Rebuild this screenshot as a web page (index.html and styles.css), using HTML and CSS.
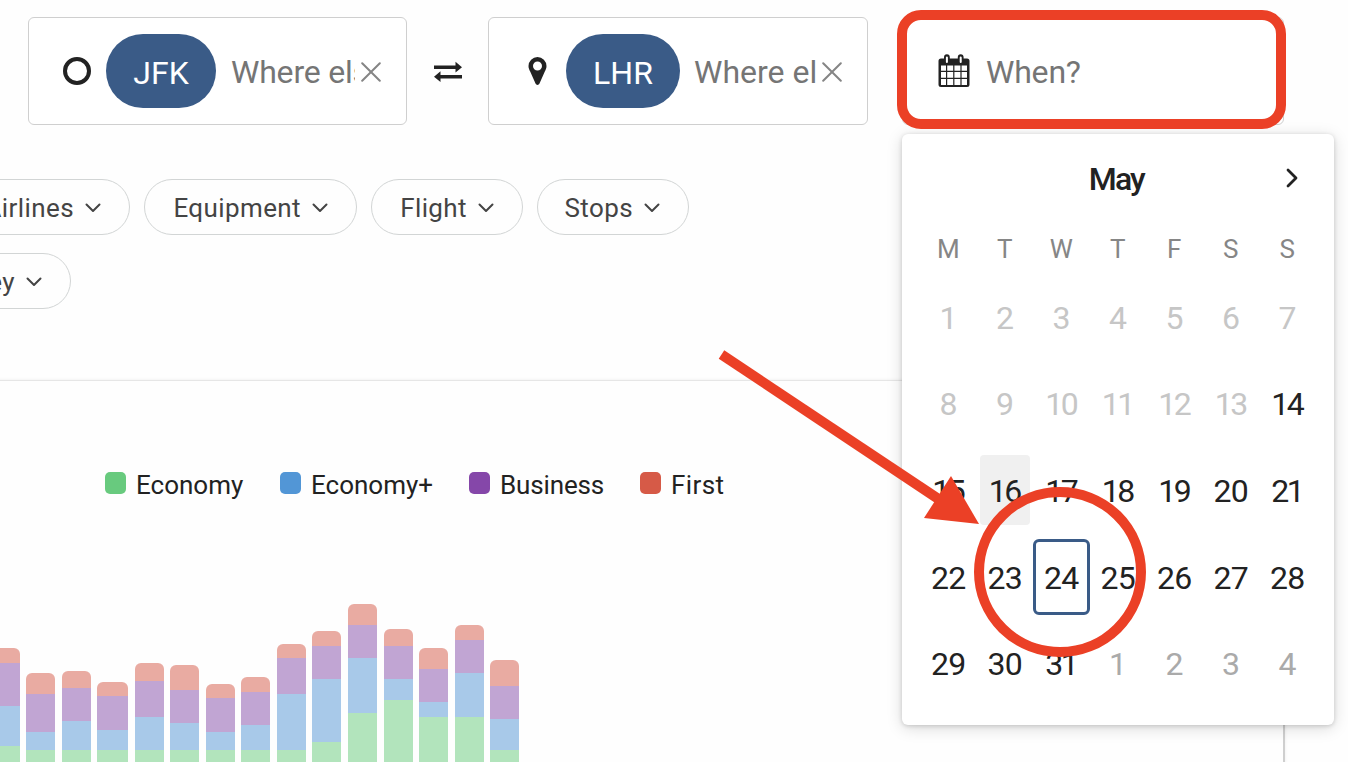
FILE: index.html
```html
<!DOCTYPE html>
<html lang="en">
<head>
<meta charset="utf-8">
<title>Flight search</title>
<link rel="stylesheet" href="styles.css">
</head>
<body>
<header class="search">
  <div class="field">
    <svg class="icon-circle" viewBox="0 0 28 28"><circle cx="14" cy="14" r="12" /></svg>
    <span class="chip chip-from">JFK</span>
    <span class="hint hint-from">Where else?</span>
    <svg class="icon-x" viewBox="0 0 20 20"><path d="M1.2 1.2 18.8 18.8M18.8 1.2 1.2 18.8" /></svg>
  </div>
  <svg class="icon-swap" viewBox="0 0 28 22"><path d="M0 4.500h21.500V.8L28 6.200l-6.500 5.400V8H0zM28 14H6.500v-3.700L0 15.700l6.500 5.400v-3.600H28z" /></svg>
  <div class="field field-to">
    <svg class="icon-pin" viewBox="0 0 18 28"><path fill-rule="evenodd" d="M9 0a9 9 0 0 1 9 9c0 2.400-.9 4-1.800 5.800L11 26.500c-.8 1.900-3.200 1.900-4 0L1.800 14.800C.9 13 0 11.400 0 9a9 9 0 0 1 9-9zm0 4.500a4.500 4.500 0 1 0 0 9 4.500 4.500 0 0 0 0-9z" /></svg>
    <span class="chip chip-to">LHR</span>
    <span class="hint hint-to">Where else?</span>
    <svg class="icon-x" viewBox="0 0 20 20"><path d="M1.2 1.2 18.8 18.8M18.8 1.2 1.2 18.8" /></svg>
  </div>
  <div class="field field-when">
    <svg class="icon-calendar" viewBox="0 0 32 34">
      <path fill-rule="evenodd" d="M3 4.500h3V3.200a2.900 2.900 0 0 1 5.800 0v1.300h8V3.200a2.900 2.900 0 0 1 5.800 0v1.300H29a2.500 2.500 0 0 1 2.500 2.500v23.500A2.500 2.500 0 0 1 29 33H3A2.500 2.500 0 0 1 .5 30.500V7A2.500 2.500 0 0 1 3 4.500zM3 11.500v5.300h5v-5.300zm6.200 0v5.300h6v-5.300zm7.200 0v5.300h6v-5.300zm7.200 0v5.300H29v-5.300zM3 18v5.800h5V18zm6.200 0v5.800h6V18zm7.200 0v5.800h6V18zm7.200 0v5.800H29V18zM3 25v6h5v-6zm6.200 0v6h6v-6zm7.200 0v6h6v-6zm7.200 0v6H29v-6z" />
      <path class="ring-slot" d="M8.900 3.400v4.600M22.700 3.400v4.600" />
    </svg>
    <span class="hint">When?</span>
  </div>
</header>

<nav class="filters">
  <div class="filter-row">
    <div class="pill pill-airlines">Airlines<svg class="caret" viewBox="0 0 16 10"><path d="m1.500 1.500 6.500 6.500 6.500-6.500" /></svg></div>
    <div class="pill pill-equipment">Equipment<svg class="caret" viewBox="0 0 16 10"><path d="m1.500 1.500 6.500 6.500 6.500-6.500" /></svg></div>
    <div class="pill pill-flight">Flight<svg class="caret" viewBox="0 0 16 10"><path d="m1.500 1.500 6.500 6.500 6.500-6.500" /></svg></div>
    <div class="pill pill-stops">Stops<svg class="caret" viewBox="0 0 16 10"><path d="m1.500 1.500 6.500 6.500 6.500-6.500" /></svg></div>
  </div>
  <div class="filter-row">
    <div class="pill pill-journey">Journey<svg class="caret" viewBox="0 0 16 10"><path d="m1.500 1.500 6.500 6.500 6.500-6.500" /></svg></div>
  </div>
</nav>

<main class="panel">
  <div class="legend">
    <div class="key key-economy"><i class="swatch economy"></i>Economy</div>
    <div class="key key-plus"><i class="swatch plus"></i>Economy+</div>
    <div class="key key-business"><i class="swatch business"></i>Business</div>
    <div class="key key-first"><i class="swatch first"></i>First</div>
  </div>
  <div class="chart" id="chart"></div>
</main>

<section class="calendar">
  <div class="month">May<svg class="next" viewBox="0 0 12 20"><path d="m2 2 8 8-8 8" /></svg></div>
  <div class="weekdays"><span>M</span><span>T</span><span>W</span><span>T</span><span>F</span><span>S</span><span>S</span></div>
  <div class="days" id="days"></div>
</section>

<svg class="marks" viewBox="0 0 1348 762">
  <rect x="902" y="15" width="379" height="109" rx="19" />
  <path d="M721.500 354.500 940 500" />
  <ellipse cx="1060" cy="572" rx="81" ry="80" />
  <path class="head" d="M951 476 979 524 924 518z" />
</svg>
<script src="app.js"></script>
</body>
</html>
```
FILE: styles.css
```css
* { box-sizing: border-box; }
body {
  margin: 0;
  width: 1348px;
  height: 762px;
  overflow: hidden;
  position: relative;
  background: #fefefe;
  color: #222;
  font-family: Roboto, "Liberation Sans", sans-serif;
  font-size: 32px;
}
svg { display: block; flex: none; }

.search { display: flex; align-items: center; height: 125px; padding: 17px 0 0 28px; }
.field {
  display: flex;
  align-items: center;
  width: 379px;
  height: 108px;
  padding-left: 34px;
  border: 1px solid #cfcfcf;
  border-radius: 6px;
  background: #fff;
}
.field-to { width: 380px; padding-left: 39px; }
.field-when { width: 382px; margin-left: 34px; padding-left: 35px; }
.icon-circle { width: 28px; height: 28px; fill: none; stroke: #222; stroke-width: 4; }
.icon-pin { width: 19px; height: 28px; fill: #222; }
.icon-swap { width: 28px; height: 22px; margin: 2px 26px 0 27px; fill: #222; }
.icon-calendar { width: 32px; height: 34px; margin-right: 16px; fill: #222; }
.ring-slot { stroke: #fff; stroke-width: 2; stroke-linecap: round; }
.icon-x { width: 20px; height: 20px; margin-top: 1px; fill: none; stroke: #858585; stroke-width: 2; stroke-linecap: round; }
.chip {
  height: 74px;
  padding-top: 3px;
  border-radius: 37px;
  background: #3a5b87;
  color: #fff;
  line-height: 72px;
  text-align: center;
}
.chip-from { width: 110px; margin-left: 15px; }
.chip-to { width: 114px; margin-left: 19px; }
.hint {
  overflow: hidden;
  padding-top: 1px;
  color: #757575;
  line-height: 42px;
  white-space: nowrap;
  letter-spacing: -.2px;
}
.hint-from { width: 124px; margin: 0 6px 0 15px; }
.hint-to { width: 122px; margin: 0 6px 0 14px; letter-spacing: 0; }

.filters { display: flex; flex-direction: column; gap: 18px; padding-top: 54px; }
.filter-row { display: flex; gap: 14px; height: 56px; }
.pill {
  display: flex;
  align-items: center;
  justify-content: flex-end;
  gap: 11px;
  height: 56px;
  padding: 1px 28px 0 0;
  border: 1px solid #d2d5d5;
  border-radius: 28px;
  color: #444;
  font-size: 26px;
  letter-spacing: .4px;
}
.caret { width: 16px; height: 10px; fill: none; stroke: #444; stroke-width: 2; stroke-linecap: round; stroke-linejoin: round; }
.pill-airlines { width: 170px; margin-left: -40px; }
.pill-equipment { width: 213px; }
.pill-flight { width: 152px; }
.pill-stops { width: 152px; }
.pill-journey { width: 170px; margin-left: -99px; }

.panel {
  display: flex;
  flex-direction: column;
  width: 1305px;
  height: 402px;
  margin: 71px 0 0 -20px;
  padding: 88px 0 0 10px;
  border: 1px solid #e6e6e6;
  border-right: 2px solid #cfcfcf;
  box-shadow: 0 0 3px rgba(0, 0, 0, .08);
}
.legend { display: flex; height: 32px; padding-left: 114px; font-size: 26px; }
.key { display: flex; align-items: center; gap: 10px; padding-top: 0; }
.key-economy { width: 175px; }
.key-plus { width: 189px; }
.key-business { width: 171px; letter-spacing: -.15px; }
.key-first { letter-spacing: .4px; }
.swatch { width: 21px; height: 22px; margin-bottom: 5px; border-radius: 5px; }
.swatch.economy { background: #68ca7e; }
.swatch.plus { background: #5296d6; }
.swatch.business { background: #8547a9; }
.swatch.first { background: #d65a47; }

.chart { display: flex; align-items: flex-end; height: 261px; flex: none; }
.bar { display: flex; flex-direction: column; width: 29px; overflow: hidden; border-radius: 6px 6px 0 0; }
.bar.wide { width: 31px; }
.seg-first { background: #e9aba2; }
.seg-business { background: #c1a5d3; }
.seg-plus { background: #a8c9e9; }
.seg-economy { background: #b2e4bc; }

.calendar {
  position: absolute;
  left: 902px;
  top: 134px;
  width: 432px;
  height: 591px;
  padding: 0 18px;
  border-radius: 6px;
  background: #fff;
  box-shadow: 0 1px 4px rgba(0, 0, 0, .16), 0 3px 16px rgba(0, 0, 0, .15);
}
.month {
  display: flex;
  align-items: center;
  justify-content: flex-end;
  height: 90px;
  padding-right: 18px;
  font-weight: 500;
  letter-spacing: -1.8px;
}
.next { width: 12px; height: 20px; margin: 0 0 3px 142px; fill: none; stroke: #222; stroke-width: 2.8; stroke-linecap: round; stroke-linejoin: round; }
.weekdays, .days { display: grid; grid-template-columns: repeat(7, 56.5px); text-align: center; }
.weekdays { height: 50px; padding-top: 2px; color: #868686; font-size: 26px; line-height: 47px; }
.days { grid-auto-rows: 86.6px; align-items: center; justify-items: center; }
.day { display: flex; align-items: center; justify-content: center; width: 50px; height: 70px; padding-top: 1px; border-radius: 4px; letter-spacing: -.7px; }
.narrow { padding-right: 1px; letter-spacing: -2.5px; }
.past { color: #c6c6c6; }
.outside { color: #aaa; }
.hovered { background: #f0f0f0; }
.selected { width: 57px; height: 76px; border: 3px solid #3a5b87; border-radius: 6px; }

.marks { position: absolute; left: 0; top: 0; width: 1348px; height: 762px; fill: none; stroke: #eb4026; stroke-width: 10; }
.marks .head { fill: #eb4026; stroke: none; }
```
FILE: app.js
```js
// Each bar: gap before it, then segment heights: first, business, economy+, economy.
const bars = [
  [0, 15, 43, 40, 16], [6, 21, 38, 18, 12], [7, 17, 33, 29, 12], [6, 14, 34, 20, 12],
  [7, 18, 36, 33, 12], [6, 25, 33, 27, 12], [7, 14, 34, 18, 12], [6, 15, 33, 25, 12],
  [7, 14, 36, 56, 12], [6, 15, 33, 63, 20], [7, 21, 33, 55, 49], [7, 17, 33, 21, 62],
  [6, 21, 33, 15, 45], [7, 15, 33, 44, 45], [6, 26, 33, 31, 12]
];
const names = ["first", "business", "plus", "economy"];
const chart = document.getElementById("chart");
bars.forEach(([gap, ...parts], i) => {
  const bar = document.createElement("div");
  bar.className = i === 3 ? "bar wide" : "bar";
  bar.style.marginLeft = gap + "px";
  parts.forEach((h, k) => {
    const seg = document.createElement("div");
    seg.className = "seg-" + names[k];
    seg.style.height = h + "px";
    bar.append(seg);
  });
  chart.append(bar);
});

const days = document.getElementById("days");
for (let n = 1; n <= 35; n++) {
  const day = document.createElement("span");
  const label = String(n > 31 ? n - 31 : n);
  const narrow = label.length === 2 && label.includes("1") ? " narrow" : "";
  day.className = "day" + narrow + (n < 14 ? " past" : n > 31 ? " outside" : n === 16 ? " hovered" : n === 24 ? " selected" : "");
  day.textContent = label;
  days.append(day);
}
```
